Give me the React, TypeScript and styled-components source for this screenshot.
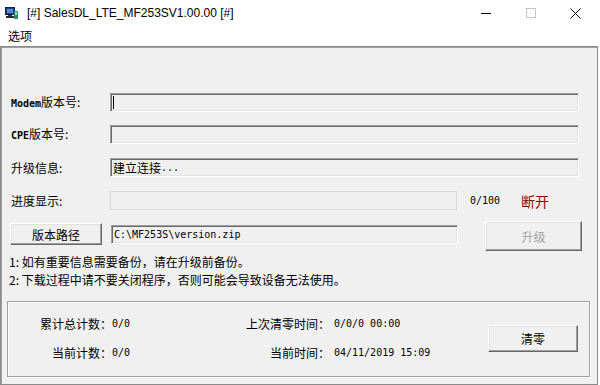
import React from "react";
import styled, { createGlobalStyle } from "styled-components";

const GlobalStyle = createGlobalStyle`
  html, body {
    margin: 0;
    padding: 0;
    background: #fff;
  }
  body {
    width: 600px;
    height: 385px;
    overflow: hidden;
    font-family: "Noto Sans CJK SC", sans-serif;
    font-size: 12px;
    color: #000;
  }
`;

const Window = styled.div`
  display: flex;
  flex-direction: column;
  width: 600px;
  height: 385px;
  background: #fff;
`;

const TitleBar = styled.div`
  display: flex;
  align-items: center;
  height: 26px;
  padding-left: 5px;
`;

const TitleText = styled.span`
  flex: 1;
  margin-left: 8px;
  font-family: "Liberation Sans", "Noto Sans CJK SC", sans-serif;
  font-size: 12px;
  line-height: 26px;
`;

const Controls = styled.div`
  display: flex;
  margin-right: 2px;
`;

const ControlButton = styled.div`
  width: 45px;
  height: 26px;
  display: flex;
  align-items: center;
  justify-content: center;
`;

const MenuBar = styled.div`
  height: 20px;
  padding-left: 8px;
  font-size: 12px;
  line-height: 20px;
`;

const Client = styled.div`
  flex: 1;
  display: flex;
  flex-direction: column;
  margin-right: 2px;
  background: #f0f0f0;
  border: 1px solid #8a8a8a;
  box-shadow: inset 1px 1px #a0a0a0;
`;

const Form = styled.div`
  display: flex;
  flex-direction: column;
  padding: 46px 18px 0 8px;
`;

const Row = styled.div<{ $top: number; $height?: number }>`
  display: flex;
  align-items: center;
  height: ${(p) => p.$height ?? 19}px;
  margin-top: ${(p) => p.$top}px;
`;

const Label = styled.div`
  width: 101px;
  flex: none;
  padding-left: 2px;
  box-sizing: border-box;
  font-size: 12px;
  line-height: 19px;
  white-space: nowrap;
`;

const Latin = styled.span`
  font-family: "DejaVu Sans Mono", monospace;
  font-size: 10px;
  font-weight: bold;
`;

const Field = styled.div<{ $width?: number; $flat?: boolean }>`
  box-sizing: border-box;
  height: 19px;
  ${(p) => (p.$width ? `width: ${p.$width}px; flex: none;` : `flex: 1;`)}
  display: flex;
  align-items: center;
  padding-left: 2px;
  background: #f0f0f0;
  border: 1px solid;
  border-color: ${(p) => (p.$flat ? "#d9d9d9" : "#a0a0a0 #fff #fff #a0a0a0")};
  box-shadow: ${(p) =>
    p.$flat ? "none" : "inset 1px 1px #696969, inset -1px -1px #e3e3e3"};
  font-size: 12px;
  line-height: 17px;
  white-space: nowrap;
  overflow: hidden;
`;

const Caret = styled.span`
  width: 1px;
  height: 13px;
  background: #000;
`;

const Mono = styled.span`
  font-family: "DejaVu Sans Mono", monospace;
  font-size: 10px;
  white-space: nowrap;
`;

const Counter = styled(Mono)`
  margin-left: 13px;
`;

const Status = styled.span`
  margin-left: 21px;
  color: #990000;
  font-size: 14px;
`;

const Button = styled.div<{ $width: number; $height: number; $disabled?: boolean }>`
  box-sizing: border-box;
  flex: none;
  width: ${(p) => p.$width}px;
  height: ${(p) => p.$height}px;
  display: flex;
  align-items: center;
  justify-content: center;
  background: #f0f0f0;
  border: 1px solid;
  border-color: #fff #696969 #696969 #fff;
  box-shadow: inset -1px -1px #a0a0a0, inset 1px 1px #e3e3e3;
  color: ${(p) => (p.$disabled ? "#a0a0a0" : "#000")};
  font-size: 12px;
`;

const PathButton = styled(Button)`
  margin-left: 1px;
  margin-right: 9px;
`;

const UpgradeButton = styled(Button)`
  margin-left: 27px;
  align-self: flex-start;
  margin-top: -2px;
`;

const Notes = styled.div`
  margin-top: 8px;
  font-size: 12px;
  line-height: 18px;
  white-space: nowrap;
`;

const GroupBox = styled.div`
  display: grid;
  grid-template-columns: 104px 134px 84px 158px 90px;
  grid-template-rows: 29px 29px;
  margin: 12px 7px 7px 6px;
  padding: 7px 0 9px 0;
  border: 1px solid #a0a0a0;
  box-shadow: inset 1px 1px #fff, 1px 1px #fff;
  font-size: 12px;
`;

const StatLabel = styled.div`
  text-align: right;
  line-height: 29px;
  white-space: nowrap;
`;

const StatValue = styled(Mono)<{ $pad?: number }>`
  padding-left: ${(p) => p.$pad ?? 0}px;
  line-height: 29px;
`;

const ClearButton = styled(Button)`
  grid-column: 5;
  grid-row: 1 / span 2;
  align-self: center;
`;

const AppIcon = () => (
  <svg width="14" height="12" viewBox="0 0 14 12">
    <rect x="0.5" y="0.5" width="9" height="7" fill="#1b3f8f" stroke="#1a1a2e" />
    <rect x="2" y="2" width="6" height="4" fill="#4f8fe0" />
    <rect x="3" y="8" width="4" height="1" fill="#333" />
    <rect x="1" y="9" width="8" height="2" fill="#2a2a2a" />
    <rect x="9" y="4" width="4" height="8" rx="1" fill="#1f8f6f" />
    <rect x="10" y="5" width="2" height="3" fill="#8fe0c0" />
  </svg>
);

const MinimizeIcon = () => (
  <svg width="10" height="10" viewBox="0 0 10 10">
    <line x1="0" y1="5.5" x2="10" y2="5.5" stroke="#000" strokeWidth="1" />
  </svg>
);

const MaximizeIcon = () => (
  <svg width="10" height="10" viewBox="0 0 10 10">
    <rect x="0.5" y="0.5" width="9" height="9" fill="none" stroke="#c4c4c4" strokeWidth="1" />
  </svg>
);

const CloseIcon = () => (
  <svg width="11" height="11" viewBox="0 0 11 11">
    <path d="M0.5 0.5 L10.5 10.5 M10.5 0.5 L0.5 10.5" stroke="#000" strokeWidth="1" />
  </svg>
);

const App: React.FC = () => (
  <Window>
    <GlobalStyle />
    <TitleBar>
      <AppIcon />
      <TitleText>[#] SalesDL_LTE_MF253SV1.00.00 [#]</TitleText>
      <Controls>
        <ControlButton>
          <MinimizeIcon />
        </ControlButton>
        <ControlButton>
          <MaximizeIcon />
        </ControlButton>
        <ControlButton>
          <CloseIcon />
        </ControlButton>
      </Controls>
    </TitleBar>
    <MenuBar>选项</MenuBar>
    <Client>
      <Form>
        <Row $top={0}>
          <Label>
            <Latin>Modem</Latin>版本号:
          </Label>
          <Field>
            <Caret />
          </Field>
        </Row>
        <Row $top={13}>
          <Label>
            <Latin>CPE</Latin>版本号:
          </Label>
          <Field />
        </Row>
        <Row $top={14}>
          <Label>升级信息:</Label>
          <Field>
            建立连接<Mono>...</Mono>
          </Field>
        </Row>
        <Row $top={14}>
          <Label>进度显示:</Label>
          <Field $width={347} $flat />
          <Counter>0/100</Counter>
          <Status>断开</Status>
        </Row>
        <Row $top={13} $height={22}>
          <PathButton $width={92} $height={22}>
            版本路径
          </PathButton>
          <Field $width={347}>
            <Mono>C:\MF253S\version.zip</Mono>
          </Field>
          <UpgradeButton $width={97} $height={30} $disabled>
            升级
          </UpgradeButton>
        </Row>
        <Notes>
          <div>1: 如有重要信息需要备份，请在升级前备份。</div>
          <div>2: 下载过程中请不要关闭程序，否则可能会导致设备无法使用。</div>
        </Notes>
      </Form>
      <GroupBox>
        <StatLabel>累计总计数：</StatLabel>
        <StatValue>0/0</StatValue>
        <StatLabel>上次清零时间：</StatLabel>
        <StatValue $pad={4}>0/0/0 00:00</StatValue>
        <ClearButton $width={90} $height={27}>
          清零
        </ClearButton>
        <StatLabel>当前计数：</StatLabel>
        <StatValue>0/0</StatValue>
        <StatLabel>当前时间：</StatLabel>
        <StatValue $pad={4}>04/11/2019 15:09</StatValue>
      </GroupBox>
    </Client>
  </Window>
);

export default App;
